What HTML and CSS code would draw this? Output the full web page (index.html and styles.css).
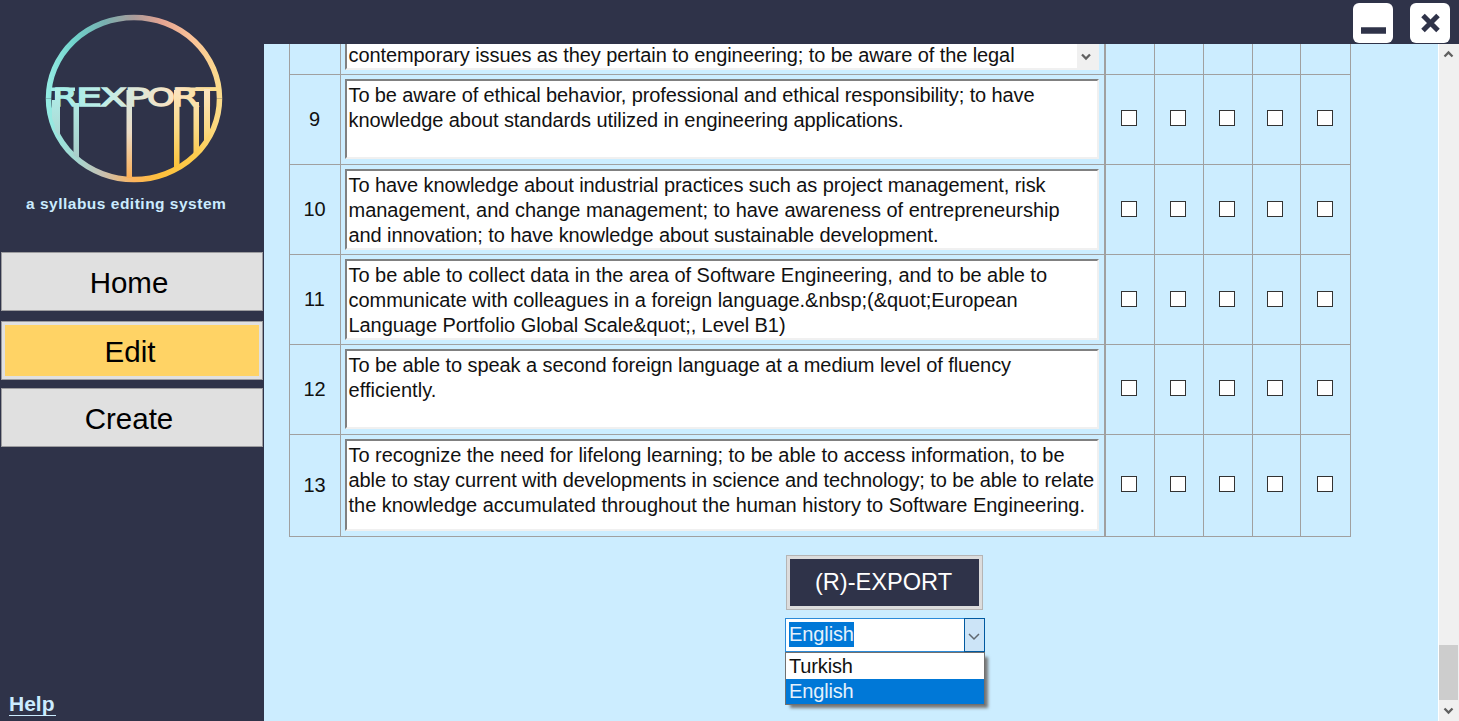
FILE: index.html
```html
<!DOCTYPE html>
<html lang="en">
<head>
<meta charset="utf-8">
<title>Rexport</title>
<link rel="stylesheet" href="styles.css">
</head>
<body>
<div class="app">
  <aside class="sidebar">
    <svg class="logo" width="184" height="176" viewBox="42 10 184 176">
      <defs>
        <linearGradient id="ring" gradientUnits="userSpaceOnUse" x1="47" y1="0" x2="221" y2="0">
          <stop offset="0" stop-color="#94ece4"/><stop offset=".16" stop-color="#70d2cb"/><stop offset=".33" stop-color="#78b0b0"/><stop offset=".5" stop-color="#aa9c9b"/><stop offset=".66" stop-color="#e5a492"/><stop offset=".83" stop-color="#fbc298"/><stop offset="1" stop-color="#fbdc8c"/>
        </linearGradient>
        <linearGradient id="bowl" gradientUnits="userSpaceOnUse" x1="47" y1="100" x2="221" y2="100">
          <stop offset="0" stop-color="#94ece4"/><stop offset=".18" stop-color="#a6d5cf"/><stop offset=".32" stop-color="#c8c0b2"/><stop offset=".5" stop-color="#fdb45c"/><stop offset=".65" stop-color="#fdc03c"/><stop offset=".85" stop-color="#fdcc4c"/><stop offset="1" stop-color="#fbdc8c"/>
        </linearGradient>
        <linearGradient id="word" gradientUnits="userSpaceOnUse" x1="52" y1="0" x2="217" y2="0">
          <stop offset="0" stop-color="#9eece6"/><stop offset=".3" stop-color="#bdeee8"/><stop offset=".5" stop-color="#dce6d8"/><stop offset=".75" stop-color="#fbe3c0"/><stop offset="1" stop-color="#fbdc88"/>
        </linearGradient>
        <linearGradient id="cool" gradientUnits="userSpaceOnUse" x1="0" y1="90" x2="0" y2="160"><stop offset="0" stop-color="#b0efe9"/><stop offset="1" stop-color="#a9ccc8"/></linearGradient>
        <linearGradient id="mid" gradientUnits="userSpaceOnUse" x1="0" y1="95" x2="0" y2="178"><stop offset="0" stop-color="#d5e8df"/><stop offset=".45" stop-color="#ecdcc5"/><stop offset="1" stop-color="#fbae55"/></linearGradient>
        <linearGradient id="warm" gradientUnits="userSpaceOnUse" x1="0" y1="90" x2="0" y2="168"><stop offset="0" stop-color="#fbe4c0"/><stop offset=".5" stop-color="#fbd983"/><stop offset="1" stop-color="#fdc236"/></linearGradient>
      </defs>
      <path d="M48.500 98.500A85.500 81 0 0 1 219.500 98.500" fill="none" stroke="url(#ring)" stroke-width="5.500"/>
      <path d="M48.500 98.500A85.500 81 0 0 0 219.500 98.500" fill="none" stroke="url(#bowl)" stroke-width="5.500"/>
      <g fill="url(#word)" stroke="url(#word)" class="wordmark">
        <text y="106" x="52.500" textLength="25" lengthAdjust="spacingAndGlyphs">R</text>
        <text y="106" x="76" textLength="26" lengthAdjust="spacingAndGlyphs">E</text>
        <text y="106" x="100" textLength="27" lengthAdjust="spacingAndGlyphs">X</text>
        <text y="106" x="124.500" textLength="26" lengthAdjust="spacingAndGlyphs">P</text>
        <text y="106" x="147" textLength="28" lengthAdjust="spacingAndGlyphs">O</text>
        <text y="106" x="172" textLength="27" lengthAdjust="spacingAndGlyphs">R</text>
        <text y="106" x="196.500" textLength="21" lengthAdjust="spacingAndGlyphs">T</text>
      </g>
      <rect x="51" y="87.500" width="24" height="3.500" fill="url(#word)"/>
      <rect x="176" y="87.500" width="42" height="3.500" fill="url(#word)"/>
      <path d="M55 88V131L60 137V88ZM73.500 103V155L79 159V103Z" fill="url(#cool)"/>
      <path d="M52 100H55V126L52 118Z" fill="url(#cool)"/>
      <path d="M126.500 90H132V178H126.500Z" fill="url(#mid)"/>
      <path d="M174 90H179.500V165L174 168ZM193.500 102H199V149L193.500 154ZM204 89H210V133L204 142Z" fill="url(#warm)"/>
    </svg>
    <p class="tagline">a syllabus editing system</p>
    <nav class="nav">
      <button class="nav-btn">Home</button>
      <button class="nav-btn active">Edit</button>
      <button class="nav-btn">Create</button>
    </nav>
    <a class="help">Help</a>
  </aside>
  <header class="titlebar">
    <button class="win"><svg width="40" height="40"><path d="M8 27.500H33" stroke="#2f3349" stroke-width="6.500"/></svg></button>
    <button class="win"><svg width="40" height="40"><path d="M13 12.500L28 27.500M28 12.500L13 27.500" stroke="#2f3349" stroke-width="5"/></svg></button>
  </header>
  <main class="content">
    <div class="page">
      <div class="grid" id="grid"></div>
      <button class="export">(R)-EXPORT</button>
      <div class="combo"><span class="value">English</span><span class="drop"><svg width="20" height="33"><path d="M4 15L9 20L14 15" fill="none" stroke="#606870" stroke-width="1.500"/></svg></span></div>
      <div class="menu"><div>Turkish</div><div class="selected">English</div></div>
    </div>
    <div class="scrollbar">
      <svg width="20" height="20"><path d="M5.500 12.500L9.500 8.500L13.500 12.500" fill="none" stroke="#606060" stroke-width="2.300"/></svg>
      <div class="thumb"></div>
      <svg width="20" height="21"><path d="M5.500 8.500L9.500 12.500L13.500 8.500" fill="none" stroke="#606060" stroke-width="2.300"/></svg>
    </div>
  </main>
</div>
<script src="grid.js"></script>
</body>
</html>
```
FILE: styles.css
```css
* { box-sizing: border-box; }
body { margin: 0; overflow: hidden; font-family: "Liberation Sans", Arial, sans-serif; font-size: 20px; color: #111; }
button { font-family: inherit; color: #000; padding: 0; border-radius: 0; }
svg { display: block; }
.app { width: 1459px; height: 721px; display: grid; grid-template-columns: 264px 1fr; grid-template-rows: 44px 1fr; background: #2f3349; }
.sidebar { grid-row: 1 / 3; display: flex; flex-direction: column; padding-top: 10px; }
.logo { margin-left: 42px; }
.wordmark { font-family: "DejaVu Sans", sans-serif; font-size: 25px; stroke-width: 1.3px; }
.tagline { margin: 8px 0 0 26px; height: 20px; font-size: 15.500px; letter-spacing: .5px; line-height: 20px; font-weight: bold; color: #cbecff; white-space: nowrap; }
.nav { margin: 38px 0 0 1px; display: flex; flex-direction: column; }
.nav-btn { width: 262px; height: 59px; border: 1px solid #9c9c9f; background: #e0e0e0; font-size: 29.500px; padding: 2px 6px 0 0; }
.nav-btn.active { height: 59px; margin: 10px 0 8px; padding-right: 4px; box-shadow: inset 0 0 0 3px #e0e0e0; background: #ffd365; }
.help { margin: auto 0 5px 9px; width: 47px; height: 24px; font-size: 21px; line-height: 24px; font-weight: bold; color: #cbecff; border-bottom: 1px solid #cbecff; }
.titlebar { display: flex; justify-content: flex-end; gap: 17px; padding: 3px 9px 0 0; }
.win { width: 40px; height: 40px; border: 0; border-radius: 6px; background: #fff; }
.content { display: flex; background: #ccedff; min-height: 0; overflow: hidden; }
.page { flex: 1; }
.grid { margin-left: 25px; width: 1062px; border: solid #a0a0a0; border-width: 0 1px 1px; }
.row { display: grid; grid-template-columns: 51px 765px 49px 49px 49px 48px 49px; height: 90px; border-top: 1px solid #a0a0a0; }
.row.cut { height: 30px; border-top: 0; }
.row.last { height: 102px; }
.cell { display: flex; align-items: center; justify-content: center; padding: 0 3px 3px 0; border-right: 1px solid #a0a0a0; }
.cell:first-child { padding: 0 1px 1px 0; }
.cell:last-child { border-right: 0; padding-right: 2px; }
.cell.text { border-right-width: 2px; align-items: stretch; justify-content: flex-start; padding: 4px 5px 5px 4px; }
.box { position: relative; flex: 1; background: #fff; border: 2px solid #808080; border-right-color: #f0f0f0; border-bottom-color: #f0f0f0; padding: 2px 0 0 1.500px; line-height: 25px; }
.cut .text { padding-top: 0; padding-bottom: 4px; }
.cut .box { border-top: 0; padding-top: 0; }
.cut .line { margin-top: -1px; }
.line { display: block; width: max-content; white-space: nowrap; }
.scroll { position: absolute; right: 0; top: 0; width: 20px; height: 24px; background: #f0f0f0; }
.check { width: 16px; height: 16px; border: 1px solid #333; background: #fff; }
.export { display: block; margin: 18px 0 0 522px; width: 197px; height: 55px; border: 1px solid #b5b5b5; box-shadow: inset 0 0 0 3px #dcdcdc; background: #2f3349; color: #fff; font-size: 23.600px; padding-right: 2px; }
.combo { margin: 8px 0 0 521px; width: 200px; height: 34px; border: 1px solid #2b8ad8; background: #fff; display: flex; justify-content: space-between; align-items: flex-start; }
.value { margin: 3px 0 0 3px; height: 25px; line-height: 25px; letter-spacing: -.1px; background: #0078d7; color: #e5f1fb; }
.drop { width: 21px; height: 34px; margin: -1px; border: 1px solid #0059a0; background: #cce4f7; }
.menu { margin-left: 521px; width: 200px; height: 53px; border: 1px solid #707070; background: #fff; box-shadow: 4px 4px 3px -1px #777; letter-spacing: -.15px; }
.menu div { height: 26px; line-height: 26px; padding-left: 3px; }
.menu .selected { height: 25px; line-height: 25px; background: #0078d7; color: #e5f1fb; }
.scrollbar { width: 21px; border-left: 1px solid #fff; background: #f0f0f0; display: flex; flex-direction: column; }
.thumb { margin-top: auto; height: 55px; width: 19px; background: #cdcdcd; }
```
FILE: grid.js
```js
const rows = [
  ["", [["contemporary issues as they pertain to engineering; to be aware of the legal", 666]]],
  ["9", [["To be aware of ethical behavior, professional and ethical responsibility; to have", 686], ["knowledge about standards utilized in engineering applications.", 555]]],
  ["10", [["To have knowledge about industrial practices such as project management, risk", 697], ["management, and change management; to have awareness of entrepreneurship", 711], ["and innovation; to have knowledge about sustainable development.", 590]]],
  ["11", [["To be able to collect data in the area of Software Engineering, and to be able to", 698.5], ["communicate with colleagues in a foreign language.&nbsp;(&quot;European", 669], ["Language Portfolio Global Scale&quot;, Level B1)", 437]]],
  ["12", [["To be able to speak a second foreign language at a medium level of fluency", 662.5], ["efficiently.", 88]]],
  ["13", [["To recognize the need for lifelong learning; to be able to access information, to be", 716], ["able to stay current with developments in science and technology; to be able to relate", 745.5], ["the knowledge accumulated throughout the human history to Software Engineering.", 736.5]]]
];
const grid = document.getElementById("grid");
function add(parent, className, text) {
  const el = document.createElement("div");
  el.className = className;
  if (text) el.textContent = text;
  parent.appendChild(el);
  return el;
}
rows.forEach(([number, lines], i) => {
  const row = add(grid, "row" + (i === 0 ? " cut" : i === rows.length - 1 ? " last" : ""));
  add(row, "cell", number);
  const box = add(add(row, "cell text"), "box");
  lines.forEach(([text, width]) => {
    const line = add(box, "line", text);
    line.style.letterSpacing = (width - line.getBoundingClientRect().width) / text.length + "px";
  });
  if (i === 0) add(box, "scroll").innerHTML = '<svg width="20" height="24"><path d="M5 10.500L9 14.500L13 10.500" fill="none" stroke="#606060" stroke-width="2.300"/></svg>';
  for (let c = 0; c < 5; c++) {
    const cell = add(row, "cell");
    if (i) add(cell, "check");
  }
});
```
